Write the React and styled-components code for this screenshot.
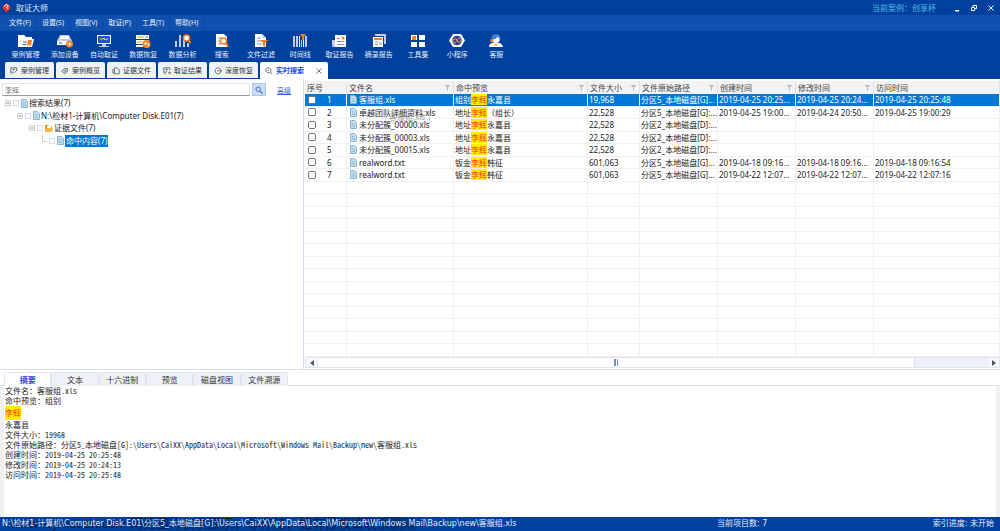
import React from "react";
import styled, { createGlobalStyle, css } from "styled-components";

const sans = `"Noto Sans", "Noto Sans CJK SC", sans-serif`;
const mono = `"Noto Sans Mono CJK SC", "Noto Sans CJK SC", monospace`;

const GlobalStyle = createGlobalStyle`
  * { box-sizing: border-box; }
  body { margin: 0; background: #fff; font-family: ${sans}; font-size: 8px; color: #222; }
  button, input { font-family: inherit; font-size: inherit; color: inherit; margin: 0; padding: 0; }
  button { border: 0; background: none; cursor: pointer; }
  svg { display: block; flex: none; }
`;

const Window = styled.div`
  display: flex;
  flex-direction: column;
  min-height: 100vh;
`;

/* ---- title and menu ---- */
const TitleBar = styled.header`
  display: flex;
  align-items: center;
  height: 15px;
  padding: 0 4px 0 2px;
  background: #00419d;
  color: #e4ebf7;
`;
const AppName = styled.h1`
  margin: 0 0 0 5px;
  font-size: 8px;
  font-weight: 400;
  line-height: 15px;
`;
const CaseName = styled.span`
  margin-left: auto;
  color: #5cb8ea;
`;
const WindowButtons = styled.div`
  display: flex;
  gap: 7px;
  margin-left: 16px;
`;
const WindowButton = styled.button`
  display: grid;
  place-items: center;
  width: 10px;
  height: 12px;
`;
const MenuBar = styled.nav`
  display: flex;
  align-items: center;
  height: 16px;
  padding-left: 4px;
  background: #1051ae;
  color: #e8eef9;
`;
const MenuItem = styled.button`
  height: 16px;
  min-width: 33px;
  padding: 0 5px;
  border-right: 1px solid #0c4aa3;
  font-size: 7px;
  line-height: 14px;
  white-space: nowrap;
`;

/* ---- toolbar ---- */
const Toolbar = styled.div`
  background: #00419d;
  height: 31px;
  padding-left: 6px;
`;
const ToolGrid = styled.div`
  display: grid;
  grid-template-columns: repeat(13, 1fr);
  width: 510px;
`;
const ToolButton = styled.button`
  display: flex;
  flex-direction: column;
  align-items: center;
  gap: 2px;
  padding-top: 3px;
  color: #e4ebf7;
  font-size: 7px;
  line-height: 10px;
  white-space: nowrap;
`;

/* ---- page tabs ---- */
const PageTabs = styled.div`
  display: flex;
  align-items: flex-end;
  gap: 2px;
  height: 17px;
  padding-left: 5px;
  background: #00419d;
  border-bottom: 1px solid #00419d;
`;
const PageTab = styled.div`
  display: flex;
  align-items: center;
  gap: 3px;
  height: ${(p) => (p.$active ? "17px" : "16px")};
  margin-bottom: ${(p) => (p.$active ? "-1px" : "0")};
  width: ${(p) => (p.$active ? "68px" : "49px")};
  padding: ${(p) => (p.$active ? "1px" : "2px")} 0 0 5px;
  border-radius: 2px 2px 0 0;
  background: ${(p) => (p.$active ? "#fff" : "#eff3f9")};
  color: ${(p) => (p.$active ? "#1747f0" : "#333")};
  font-size: 7px;
  > svg { color: #555; }
`;
const PageTabButton = styled.button`
  white-space: nowrap;
  line-height: 14px;
  font-weight: ${(p) => (p.$active ? 700 : 400)};
`;
const CloseTab = styled.button`
  display: grid;
  place-items: center;
  width: 10px;
  height: 12px;
  margin: 0 4px 0 auto;
`;

/* ---- search panel ---- */
const Main = styled.main`
  display: grid;
  grid-template-columns: 304px minmax(0, 1fr);
  flex: 1 0 auto;
  min-height: 290px;
`;
const SearchPanel = styled.section`
  border-right: 1px solid #d5dcec;
  padding: 4px 12px 0 2px;
`;
const SearchRow = styled.form`
  display: flex;
  align-items: center;
  height: 13px;
`;
const SearchInput = styled.input`
  flex: 1;
  min-width: 0;
  height: 13px;
  padding: 0 2px;
  border: 1px solid #e4e4e4;
  border-bottom-color: #999;
  background: #fff;
  color: #777;
  font-size: 7px;
  outline: 0;
`;
const SearchButton = styled.button`
  display: grid;
  place-items: center;
  width: 14px;
  height: 13px;
  margin: 0 11px 0 2px;
  border: 1px solid #a9c4ee;
  background: #c9dcf8;
`;
const AdvancedLink = styled.a`
  color: #3560e0;
  font-size: 7px;
`;
const Tree = styled.ul`
  display: grid;
  grid-auto-rows: 1fr;
  height: 50px;
  margin: 1px 0 0;
  padding: 0 0 0 3px;
  list-style: none;
`;
const TreeRow = styled.li`
  display: flex;
  align-items: center;
  gap: 2px;
  padding-left: ${(p) => p.$level * 12}px;
  white-space: nowrap;
`;
const TreeBox = styled.input`
  appearance: none;
  width: 6px;
  height: 6px;
  border: 1px solid #cfdcf5;
  background: #fff;
`;
const TreeLabel = styled.label`
  height: 12px;
  line-height: 12px;
  margin-left: -1px;
  ${(p) => p.$selected && css`background: #0078d7; color: #fff; padding: 0 1px;`}
`;

/* ---- results table ---- */
const Results = styled.section`
  display: flex;
  flex-direction: column;
  padding: 2px 0 1px 1px;
  min-width: 0;
`;
const Table = styled.table`
  display: flex;
  flex-direction: column;
  flex: 1;
  thead { display: block; }
  tbody { display: grid; grid-auto-rows: 1fr; flex: 1; }
`;
const columns = css`
  display: grid;
  grid-template-columns: 42px 107px 134px 52px 78px 78px 78px minmax(0, 1fr);
`;
const HeadRow = styled.tr`
  ${columns}
  height: 13px;
  background: #f2f2f2;
`;
const HeadCell = styled.th`
  display: flex;
  align-items: center;
  justify-content: space-between;
  min-width: 0;
  padding: 0 3px 0 2px;
  border-right: 1px solid #dfe2ec;
  color: #444;
  font-weight: 400;
  line-height: 13px;
  white-space: nowrap;
`;
const Row = styled.tr`
  ${columns}
  background: ${(p) => (p.$selected ? "#0078d7" : "#fff")};
  color: ${(p) => (p.$selected ? "#fff" : "#222")};
`;
const Cell = styled.td`
  position: relative;
  display: flex;
  align-items: center;
  min-width: 0;
  padding: 0 1px;
  border-right: 1px solid #f0f0f3;
  border-bottom: 1px solid #f0f0f3;
  line-height: 11px;
  white-space: nowrap;
`;
const FileName = styled.span`
  display: flex;
  align-items: center;
  gap: 2px;
  padding-left: 2px;
`;
const RowCheck = styled.input`
  appearance: none;
  width: 8px;
  height: 8px;
  margin: 0 11px 0 2px;
  border: 1px solid #777;
  border-radius: 2px;
  background: #fff;
`;
const Hit = styled.mark`
  background: #ffed00;
  color: #f23c1d;
`;
const DragGhost = styled.span`
  position: absolute;
  z-index: 1;
  left: 38px;
  top: 4px;
  padding: 0 4px 0 3px;
  border: 1px solid #8885;
  color: #777b;
  line-height: 10px;
`;
const ScrollBar = styled.div`
  display: grid;
  grid-template-columns: 12px minmax(0, 599fr) minmax(0, 74fr) 10px;
  height: 11px;
  border: 1px solid #e0e6f1;
  background: #edf1f7;
`;
const ScrollArrow = styled.button`
  display: grid;
  place-items: center;
  background: #f8f9fb;
  border-right: ${(p) => (p.$left ? "1px solid #e0e6f1" : "0")};
`;
const ScrollThumb = styled.div`
  display: flex;
  align-items: center;
  justify-content: center;
  gap: 1px;
  background: #fff;
  border-right: 1px solid #d8e0ee;
`;
const GripLine = styled.i`
  width: 1px;
  height: 7px;
  background: #6e93c6;
  &:first-child { width: 2px; }
`;

/* ---- detail pane ---- */
const Detail = styled.section`
  border-top: 1px solid #d5dcec;
`;
const DetailTabs = styled.div`
  height: 16px;
  padding: 2px 0 0 4px;
  border-bottom: 1px solid #dcdfe8;
`;
const DetailTabGrid = styled.div`
  display: grid;
  grid-template-columns: repeat(6, 1fr);
  width: 284px;
  height: 14px;
`;
const DetailTab = styled.button`
  border: 1px solid #e0e5f0;
  border-bottom: 0;
  border-radius: 2px 2px 0 0;
  background: ${(p) => (p.$active ? "#fff" : "#eef2f8")};
  color: ${(p) => (p.$active ? "#1747f0" : "#333")};
  font-weight: ${(p) => (p.$active ? 700 : 400)};
  line-height: 12px;
  white-space: nowrap;
`;
const Summary = styled.div`
  min-height: 131px;
  padding-left: 1px;
  border: solid #f0f0f0;
  border-width: 0 4px;
  font-family: ${mono};
`;
const Line = styled.p`
  margin: 0;
  line-height: 10px;
  white-space: nowrap;
`;
const HitLine = styled.p`
  margin: 0;
  line-height: 14px;
  font-family: ${sans};
`;
const HitBlock = styled(Hit)`
  display: inline-block;
`;

/* ---- status bar ---- */
const StatusBar = styled.footer`
  position: relative;
  display: grid;
  grid-template-columns: minmax(0, 717fr) minmax(0, 283fr);
  height: 14px;
  background: #00419d;
  color: #e4ebf7;
  font-family: "DejaVu Sans", "Noto Sans CJK SC", sans-serif;
  line-height: 14px;
  white-space: nowrap;
`;
const StatusPath = styled.span`
  position: relative;
  padding-left: 2px;
`;
const StatusInfo = styled.span`
  display: flex;
  justify-content: space-between;
  padding-right: 6px;
`;
const Watermark = styled.span`
  position: absolute;
  left: 10px;
  top: 0;
  color: #0008;
  font-family: "Liberation Sans", "Noto Sans CJK SC", sans-serif;
  font-size: 13px;
  line-height: 14px;
`;

const O = "#f5811f";
const L = "#c5c9ee";
const D = "#4a55b5";

const toolArt = {
  folder: (
    <>
      <path d="M0 1h6l2 2h6v3H0z" fill="#fff" />
      <path d="M0 4h3l-1 9H0z" fill="#fff" />
      <path d="M3 5h13l-2 8H1z" fill="#fff" />
      <path d="M5 8h4M4.500 10.500h4" stroke={D} />
      <path d="M10 6h4l-1 6-2-1-2 1z" fill={O} />
    </>
  ),
  drive: (
    <>
      <path d="M3 1h9l3 6H0z" fill={L} />
      <path d="M4 2h7l1 3H3z" fill="#fff" />
      <path d="M0 7h15v4H0z" fill="#fff" />
      <path d="M2 9h3" stroke={D} />
      <circle cx="12.500" cy="10" r="3.500" fill={O} />
      <path d="M10.500 10h4M12.500 8v4" stroke="#fff" />
    </>
  ),
  monitor: (
    <>
      <path d="M1 1h14v9H1z" fill="#fff" />
      <path d="M2 2h12v7H2z" fill="#1f53d6" />
      <path d="M4 5h3l1-1 1 2 1-1h2" stroke="#f6dc36" fill="none" />
      <path d="M6 10h4v2H6zM3 12h10v1H3z" fill={L} />
    </>
  ),
  restore: (
    <>
      <path d="M1 1h13v4H1zM1 6h13v4H1zM1 11h7v2H1z" fill="#fff" />
      <path d="M2 3h7M2 8h5" stroke="#c4a900" />
      <path d="M11 3h2" stroke={D} />
      <circle cx="11.500" cy="10" r="4" fill={O} />
      <path d="M9.500 9.500h3a1.500 1.500 0 0 1 0 3M11 8L9.500 9.500 11 11" stroke="#fff" fill="none" />
    </>
  ),
  analyze: (
    <>
      <path d="M0 7h2v6H0zM4 1h2v12H4zM8 5h2v8H8zM12 9h2v4h-2z" fill={L} />
      <circle cx="11.500" cy="4" r="3" fill="#fff" stroke={O} strokeWidth="1.500" />
      <path d="M13.500 6.500L16 9" stroke={O} strokeWidth="1.800" />
    </>
  ),
  search: (
    <>
      <path d="M2 0h8l3 3v10H2z" fill="#fff" />
      <path d="M4 4h4M4 7h3M4 10h3" stroke={D} strokeOpacity=".7" />
      <circle cx="9.500" cy="7" r="3" fill="#fff" stroke={O} strokeWidth="1.500" />
      <path d="M11.500 9.500l3 3" stroke={O} strokeWidth="1.800" />
    </>
  ),
  filter: (
    <>
      <path d="M2 0h7l4 4v9H2z" fill="#fff" />
      <path d="M9 0v4h4z" fill={L} />
      <path d="M4 4h4M4 7h4M4 10h5" stroke={D} strokeOpacity=".7" />
      <path d="M7 6h8l-3 3v4l-2-1V9z" fill={O} />
    </>
  ),
  timeline: (
    <>
      <path d="M1 2h2v11H1zM4 2h2v11H4zM13 2h2v11h-2z" fill={L} />
      <path d="M7 2h1v11H7zM11 5h1v8h-1z" fill="#fff" />
      <path d="M8 0h6l-2 3v3h-2V3z" fill={O} />
      <path d="M9 6h1v7H9z" fill={L} />
    </>
  ),
  report: (
    <>
      <path d="M4 1h11v12H4z" fill="#fff" />
      <path d="M1 6h3v7H2l-1-1z" fill={L} />
      <path d="M6 4.500h3M6 7.500h7M6 10.500h7" stroke={D} strokeOpacity=".7" />
      <circle cx="12" cy="4" r="1.500" fill={O} />
    </>
  ),
  excerpt: (
    <>
      <path d="M4 0h11v10h-2V2H4z" fill={L} />
      <path d="M2 3h10v10H2z" fill="#fff" />
      <path d="M3 5h8" stroke={O} strokeWidth="2" />
      <path d="M4 8h3M4 10.500h3" stroke={D} strokeOpacity=".7" />
      <path d="M8 8h3v3H8z" fill={L} />
    </>
  ),
  tools: (
    <>
      <path d="M1 1h6v5H1zM9 1h6v5H9zM1 8h6v5H1zM9 8h6v5H9z" fill="#fff" />
      <path d="M2 2h4v4H2z" fill={O} />
    </>
  ),
  mini: (
    <>
      <path d="M4 0h8l4 6.500-4 6.500H4L0 6.500z" fill="#fff" />
      <circle cx="8" cy="6.500" r="4.800" fill="#29429b" />
      <path d="M7 8.500a2 2 0 1 1 1-2 2 2 0 1 0 1-2M8 5v3" fill="none" stroke="#e9a52d" />
    </>
  ),
  service: (
    <>
      <circle cx="8" cy="4.500" r="4.500" fill="#3f7bd2" />
      <path d="M4.500 5.500c3 0 4-1 5-3 1 1 2 2 2 3a3.500 3.500 0 0 1-7 0" fill="#fff" />
      <path d="M1 13c0-3 2-4 4-4h5c3 0 4 1 5 4z" fill="#fff" />
      <path d="M2 5.500h3v3H3z" fill={O} />
      <path d="M6 10l2 2 2-2z" fill={O} />
    </>
  ),
};

const tabArt = {
  edit: <path d="M8 4V1H1v6h3M5 7l3.500-3.500M3 3h3M3 5h1" />,
  overview: <path d="M1 5l3-3 4 0-1 4-3 2zM3 5l3-2M4 6.500l2-2" />,
  files: <path d="M3 2.500V1h3l2.500 2v5H3V3.500M3 3H1v4h2" />,
  result: <path d="M8 4V1H1v6h3M3 3h3M3 5h2M6 7h3M7.500 5.500L9 7 7.500 8.500" />,
  recover: <path d="M8 3a3.500 3.500 0 1 0 0 3M4 4.500h5M7.500 3L9 4.500 7.500 6" />,
  live: <path d="M4 1a3 3 0 1 0 .1 0M6.200 6.200L8.500 8.500M3 4h2" />,
};

const FileIcon = () => (
  <svg width="7" height="9" viewBox="0 0 7 9">
    <path d="M.5.500h4l2 2v6h-6z" fill="#bfdff0" stroke="#92b4ca" />
    <path d="M2 3.500h2M2 5h3M2 6.500h3" stroke="#7fb0d0" strokeWidth=".6" />
  </svg>
);
const FolderIcon = () => (
  <svg width="8" height="9" viewBox="0 0 8 9">
    <path d="M0 1h3l1 1h3v5H0z" fill="#e99b24" />
    <path d="M2 2h4v3H2z" fill="#fff" />
    <path d="M0 8l1.500-4H8L7 8z" fill="#f8b944" />
  </svg>
);
const Expander = () => (
  <svg width="6" height="6" viewBox="0 0 6 6" fill="none">
    <path d="M.5.500h5v5h-5z" stroke="#ccc" />
    <path d="M1.500 3h3" stroke="#888" />
  </svg>
);
const Branch = () => (
  <svg width="6" height="12" viewBox="0 0 6 12" fill="none">
    <path d="M1.500 0v6.500H6" stroke="#ccc" />
  </svg>
);
const Funnel = () => (
  <svg width="5" height="6" viewBox="0 0 5 6" fill="none">
    <path d="M0 .5h5M1 1.500h3M2.500 1v5" stroke="#bbb" />
  </svg>
);

const menus = ["文件(F)", "设置(S)", "视图(V)", "取证(P)", "工具(T)", "帮助(H)"];
const tools = [
  ["folder", "案例管理"], ["drive", "添加设备"], ["monitor", "自动取证"], ["restore", "数据恢复"],
  ["analyze", "数据分析"], ["search", "搜索"], ["filter", "文件过滤"], ["timeline", "时间线"],
  ["report", "取证报告"], ["excerpt", "摘录报告"], ["tools", "工具集"], ["mini", "小程序"], ["service", "客服"],
];
const pages = [
  ["edit", "案例管理"], ["overview", "案例概览"], ["files", "证据文件"],
  ["result", "取证结果"], ["recover", "深度恢复"], ["live", "实时搜索"],
];
const nodes = [
  { label: "搜索结果(7)" },
  { label: "N:\\检材1-计算机\\Computer Disk.E01(7)" },
  { label: "证据文件(7)", folder: true },
  { label: "命中内容(7)", leaf: true },
];
const heads = ["序号", "文件名", "命中预览", "文件大小", "文件原始路径", "创建时间", "修改时间", "访问时间"];
const G = "分区5_本地磁盘[G]...";
const F = "分区2_本地磁盘[D]:...";
const files = [
  ["客服组.xls", "组别", "永嘉县", "19,968", G, "2019-04-25 20:25...", "2019-04-25 20:24...", "2019-04-25 20:25:48"],
  ["卓越团队详细资料.xls", "地址", "（组长）", "22,528", "分区5_本地磁盘[G]:...", "2019-04-25 19:00...", "2019-04-24 20:50...", "2019-04-25 19:00:29"],
  ["未分配簇_00000.xls", "地址", "永嘉县", "22,528", F, "", "", ""],
  ["未分配簇_00003.xls", "地址", "永嘉县", "22,528", F, "", "", ""],
  ["未分配簇_00015.xls", "地址", "永嘉县", "22,528", F, "", "", ""],
  ["realword.txt", "钣金", "韩征", "601,063", G, "2019-04-18 09:16...", "2019-04-18 09:16...", "2019-04-18 09:16:54"],
  ["realword.txt", "钣金", "韩征", "601,063", G, "2019-04-22 12:07...", "2019-04-22 12:07...", "2019-04-22 12:07:16"],
];
const blankRows = Array.from({ length: 14 });
const details = ["摘要", "文本", "十六进制", "预览", "磁盘视图", "文件溯源"];

export default function App() {
  return (
    <Window>
      <GlobalStyle />
      <TitleBar>
        <svg width="9" height="10" viewBox="0 0 9 10">
          <path d="M4.500 0L9 4 4.500 9.500 0 4z" fill="#e2352f" />
          <path d="M2 3.500l2.500-2 2 1.500-2 1.500 2 1.500" stroke="#fff" fill="none" />
          <path d="M1 6l3.500 3.500L8 6" stroke="#a31a20" fill="none" />
        </svg>
        <AppName>取证大师</AppName>
        <CaseName>当前案例：创享杯</CaseName>
        <WindowButtons>
          <WindowButton aria-label="最小化">
            <svg width="6" height="8" viewBox="0 0 6 8"><path d="M1 6h4v1.500H1z" fill="#fff" /></svg>
          </WindowButton>
          <WindowButton aria-label="还原">
            <svg width="6" height="6" viewBox="0 0 6 6" fill="none" stroke="#fff">
              <path d="M2 2V.500h3.500v3H4M.500 2.500h3v3h-3z" />
            </svg>
          </WindowButton>
          <WindowButton aria-label="关闭">
            <svg width="6" height="6" viewBox="0 0 6 6" stroke="#fff"><path d="M.5.500l5 5M5.500.500l-5 5" /></svg>
          </WindowButton>
        </WindowButtons>
      </TitleBar>
      <MenuBar>
        {menus.map((m) => <MenuItem key={m}>{m}</MenuItem>)}
      </MenuBar>
      <Toolbar>
        <ToolGrid>
          {tools.map(([art, label]) => (
            <ToolButton key={art}>
              <svg width="16" height="14" viewBox="0 0 16 14">{toolArt[art]}</svg>
              {label}
            </ToolButton>
          ))}
        </ToolGrid>
      </Toolbar>
      <PageTabs>
        {pages.map(([art, label]) => {
          const active = art === "live";
          return (
            <PageTab key={art} $active={active}>
              <svg width="8" height="8" viewBox="0 0 9.500 9.500" fill="none" stroke="currentColor">{tabArt[art]}</svg>
              <PageTabButton $active={active}>{label}</PageTabButton>
              {active && (
                <CloseTab aria-label="关闭标签">
                  <svg width="6" height="6" viewBox="0 0 6 6" stroke="#777"><path d="M.5.500l5 5M5.500.500l-5 5" /></svg>
                </CloseTab>
              )}
            </PageTab>
          );
        })}
      </PageTabs>

      <Main>
        <SearchPanel>
          <SearchRow onSubmit={(e) => e.preventDefault()}>
            <SearchInput aria-label="关键词" defaultValue="李辉" />
            <SearchButton aria-label="搜索">
              <svg width="8" height="8" viewBox="0 0 8 8" fill="none" stroke="#4a6fb5">
                <circle cx="3.200" cy="3.200" r="2.200" />
                <path d="M5 5l2.500 2.500" strokeWidth="1.300" />
              </svg>
            </SearchButton>
            <AdvancedLink href="#advanced">高级</AdvancedLink>
          </SearchRow>
          <Tree>
            {nodes.map((n, i) => (
              <TreeRow key={n.label} $level={i}>
                {n.leaf ? <Branch /> : <Expander />}
                <TreeBox type="checkbox" id={`node${i}`} />
                {n.folder ? <FolderIcon /> : <FileIcon />}
                <TreeLabel htmlFor={`node${i}`} $selected={n.leaf}>{n.label}</TreeLabel>
              </TreeRow>
            ))}
          </Tree>
        </SearchPanel>

        <Results>
          <Table>
            <thead>
              <HeadRow>
                {heads.map((h, i) => (
                  <HeadCell key={h}>
                    {h}
                    {i > 0 && i < 7 && <Funnel />}
                  </HeadCell>
                ))}
              </HeadRow>
            </thead>
            <tbody>
              {files.map(([name, before, after, ...rest], i) => (
                <Row key={i} $selected={i === 0}>
                  <Cell>
                    <RowCheck type="checkbox" aria-label={name} />
                    {i + 1}
                  </Cell>
                  <Cell>
                    <FileName><FileIcon />{name}</FileName>
                    {i === 1 && <DragGhost>客服组.xls</DragGhost>}
                  </Cell>
                  <Cell>{before}<Hit>李辉</Hit>{after}</Cell>
                  {rest.map((v, k) => <Cell key={k}>{v}</Cell>)}
                </Row>
              ))}
              {blankRows.map((_, i) => (
                <Row key={`blank${i}`}>
                  {heads.map((h) => <Cell key={h} />)}
                </Row>
              ))}
            </tbody>
          </Table>
          <ScrollBar>
            <ScrollArrow $left aria-label="向左滚动">
              <svg width="4" height="6" viewBox="0 0 4 6"><path d="M4 0v6L0 3z" fill="#555" /></svg>
            </ScrollArrow>
            <ScrollThumb><GripLine /><GripLine /></ScrollThumb>
            <span />
            <ScrollArrow aria-label="向右滚动">
              <svg width="4" height="6" viewBox="0 0 4 6"><path d="M0 0v6l4-3z" fill="#555" /></svg>
            </ScrollArrow>
          </ScrollBar>
        </Results>
      </Main>

      <Detail>
        <DetailTabs>
          <DetailTabGrid>
            {details.map((d, i) => <DetailTab key={d} $active={i === 0}>{d}</DetailTab>)}
          </DetailTabGrid>
        </DetailTabs>
        <Summary>
          <Line>文件名：客服组.xls</Line>
          <Line>命中预览：组别</Line>
          <HitLine><HitBlock>李辉</HitBlock></HitLine>
          <Line>永嘉县</Line>
          <Line>文件大小：19968</Line>
          <Line>{"文件原始路径：分区5_本地磁盘[G]:\\Users\\CaiXX\\AppData\\Local\\Microsoft\\Windows Mail\\Backup\\new\\客服组.xls"}</Line>
          <Line>创建时间：2019-04-25 20:25:48</Line>
          <Line>修改时间：2019-04-25 20:24:13</Line>
          <Line>访问时间：2019-04-25 20:25:48</Line>
        </Summary>
      </Detail>

      <StatusBar>
        <Watermark>www.toymoban.com 网络图片仅供展示，非存储，如有侵权请联系删除</Watermark>
        <StatusPath>{"N:\\检材1-计算机\\Computer Disk.E01\\分区5_本地磁盘[G]:\\Users\\CaiXX\\AppData\\Local\\Microsoft\\Windows Mail\\Backup\\new\\客服组.xls"}</StatusPath>
        <StatusInfo>
          <span>当前项目数: 7</span>
          <span>索引进度: 未开始</span>
        </StatusInfo>
      </StatusBar>
    </Window>
  );
}
